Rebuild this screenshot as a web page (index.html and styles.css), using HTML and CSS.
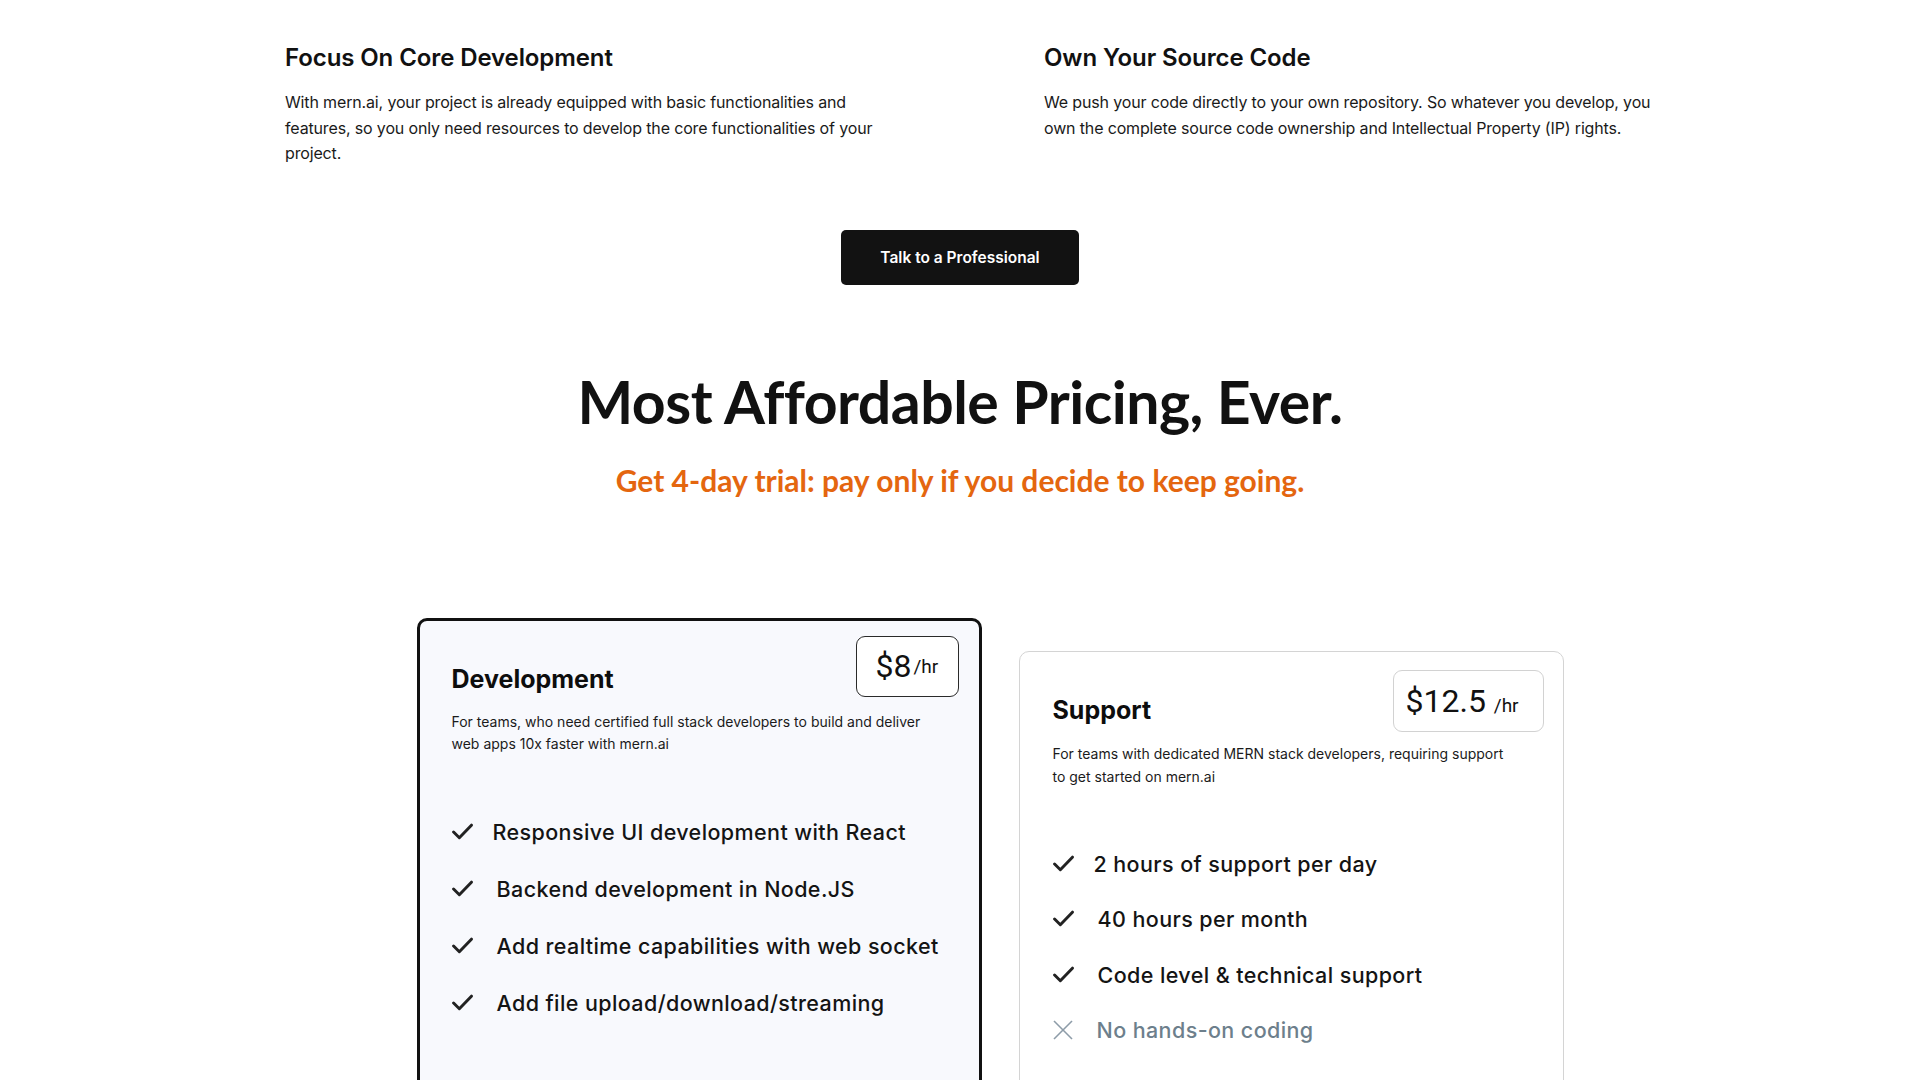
FILE: index.html
```html
<!DOCTYPE html>
<html lang="en">
<head>
<meta charset="utf-8">
<title>mern.ai pricing</title>
<link rel="stylesheet" href="styles.css">
</head>
<body>
<section class="benefits">
  <div class="benefit benefit-left">
    <h3 class="benefit-title">Focus On Core Development</h3>
    <p class="benefit-text">With mern.ai, your project is already equipped with basic functionalities and features, so you only need resources to develop the core functionalities of your project.</p>
  </div>
  <div class="benefit benefit-right">
    <h3 class="benefit-title">Own Your Source Code</h3>
    <p class="benefit-text">We push your code directly to your own repository. So whatever you develop, you own the complete source code ownership and Intellectual Property (IP) rights.</p>
  </div>
</section>

<div class="cta">
  <button class="cta-button" type="button">Talk to a Professional</button>
</div>

<section class="pricing">
  <h2 class="pricing-title">Most Affordable Pricing, Ever.</h2>
  <p class="pricing-sub">Get 4-day trial: pay only if you decide to keep going.</p>

  <div class="plans">
    <div class="plan plan-dev">
      <div class="plan-head">
        <h3 class="plan-name">Development</h3>
        <div class="badge badge-dev"><span class="amount">$8</span><span class="unit">/hr</span></div>
      </div>
      <p class="plan-desc">For teams, who need certified full stack developers to build and deliver web apps 10x faster with mern.ai</p>
      <ul class="plan-list">
        <li class="item item-first"><svg class="check" viewBox="0 0 20 17"><polyline points="1.5,8.5 7,14 18.5,2" /></svg><span>Responsive UI development with React</span></li>
        <li class="item"><svg class="check" viewBox="0 0 20 17"><polyline points="1.5,8.5 7,14 18.5,2" /></svg><span>Backend development in Node.JS</span></li>
        <li class="item"><svg class="check" viewBox="0 0 20 17"><polyline points="1.5,8.5 7,14 18.5,2" /></svg><span>Add realtime capabilities with web socket</span></li>
        <li class="item"><svg class="check" viewBox="0 0 20 17"><polyline points="1.5,8.5 7,14 18.5,2" /></svg><span>Add file upload/download/streaming</span></li>
      </ul>
    </div>

    <div class="plan plan-support">
      <div class="plan-head">
        <h3 class="plan-name">Support</h3>
        <div class="badge badge-support"><span class="amount">$12.5 <span class="unit">/hr</span></span></div>
      </div>
      <p class="plan-desc">For teams with dedicated MERN stack developers, requiring support to get started on mern.ai</p>
      <ul class="plan-list">
        <li class="item item-first"><svg class="check" viewBox="0 0 20 17"><polyline points="1.5,8.5 7,14 18.5,2" /></svg><span>2 hours of support per day</span></li>
        <li class="item"><svg class="check" viewBox="0 0 20 17"><polyline points="1.5,8.5 7,14 18.5,2" /></svg><span>40 hours per month</span></li>
        <li class="item"><svg class="check" viewBox="0 0 20 17"><polyline points="1.5,8.5 7,14 18.5,2" /></svg><span>Code level &amp; technical support</span></li>
        <li class="item item-off"><svg class="cross" viewBox="0 0 20 20"><line x1="1" y1="1" x2="19" y2="19" /><line x1="19" y1="1" x2="1" y2="19" /></svg><span>No hands-on coding</span></li>
      </ul>
    </div>
  </div>
</section>
</body>
</html>
```

FILE: styles.css
```css
* { box-sizing: border-box; }

html, body {
  margin: 0;
  padding: 0;
  background: #ffffff;
  color: #111111;
  font-family: Inter, "Noto Sans", sans-serif;
  overflow: hidden;
}

.benefits {
  display: grid;
  grid-template-columns: 620px 620px;
  column-gap: 139px;
  margin-left: 285px;
  padding-top: 44px;
}

.benefit-title {
  margin: 0;
  font-size: 24px;
  line-height: 28px;
  font-weight: 600;
  color: #111;
  letter-spacing: -0.1px;
}

.benefit-text {
  margin: 18px 0 0;
  font-size: 16px;
  line-height: 25.6px;
  color: #1a1a1a;
  letter-spacing: -0.15px;
}

.cta {
  display: flex;
  justify-content: center;
  margin-top: 63px;
}

.cta-button {
  width: 238px;
  height: 55px;
  border: none;
  border-radius: 5px;
  background: #121212;
  color: #ffffff;
  font-family: Inter, sans-serif;
  font-size: 15.5px;
  font-weight: 600;
}

.pricing {
  text-align: center;
}

.pricing-title {
  margin: 82px 0 0;
  font-family: Lato, sans-serif;
  font-weight: 700;
  font-size: 59px;
  line-height: 70px;
  color: #111;
  letter-spacing: -0.5px;
}

.pricing-sub {
  margin: 25px 0 0;
  font-family: Lato, sans-serif;
  font-weight: 700;
  font-size: 30px;
  line-height: 36px;
  color: #e4660f;
}

.plans {
  display: flex;
  justify-content: center;
  align-items: flex-start;
  gap: 37px;
  padding-left: 60px;
  margin-top: 120px;
  text-align: left;
}

.plan {
  border-radius: 10px;
  min-height: 560px;
}

.plan-dev {
  width: 565px;
  border: 3px solid #111;
  background: #f8f9fd;
  padding: 15px 20px 0 32px;
}

.plan-support {
  width: 545px;
  margin-top: 33px;
  border: 1px solid #d4d4d4;
  background: #ffffff;
  padding: 18px 19px 0 33px;
}

.plan-head {
  display: flex;
  justify-content: space-between;
  align-items: flex-start;
}

.plan-name {
  margin: 28px 0 0;
  font-size: 25px;
  line-height: 30px;
  font-weight: 700;
  color: #0d0d0d;
}

.plan-support .plan-name { margin-top: 25px; }

.badge {
  display: flex;
  align-items: center;
  height: 61px;
  background: #fff;
  border-radius: 9px;
  font-family: Roboto, sans-serif;
  color: #111;
}

.badge-dev {
  width: 103px;
  border: 1px solid #2a2a2a;
  padding-left: 19px;
}

.badge-support {
  width: 151px;
  height: 62px;
  border: 1px solid #d2d2d2;
  padding-left: 12px;
}

.amount {
  font-size: 32px;
  line-height: 1;
}

.unit {
  font-size: 19px;
  margin-left: 2px;
}

.badge-support .unit { margin-left: 0; }

.plan-desc {
  margin: 14px 0 0;
  font-size: 14px;
  line-height: 22px;
  color: #1b1b1b;
  letter-spacing: 0;
  max-width: 480px;
}

.plan-support .plan-desc {
  margin-top: 10px;
  line-height: 23.5px;
  max-width: 458px;
}

.plan-list {
  list-style: none;
  margin: 62px 0 0;
  padding: 0;
  display: flex;
  flex-direction: column;
  gap: 27px;
}

.plan-support .plan-list {
  margin-top: 60px;
  gap: 25.5px;
}

.item {
  display: flex;
  align-items: center;
  height: 30px;
  font-size: 21.5px;
  font-weight: 500;
  color: #141414;
  letter-spacing: 0.4px;
}

.item span { margin-left: 24px; }
.item-first span { margin-left: 20px; }

.check {
  width: 21px;
  height: 18px;
  flex: none;
}

.check polyline {
  fill: none;
  stroke: #222;
  stroke-width: 2.8;
  stroke-linecap: round;
  stroke-linejoin: round;
}

.cross {
  width: 20px;
  height: 20px;
  flex: none;
}

.cross line {
  stroke: #8d9ca8;
  stroke-width: 1.6;
}

.item-off { color: #6d7f8c; }
```
